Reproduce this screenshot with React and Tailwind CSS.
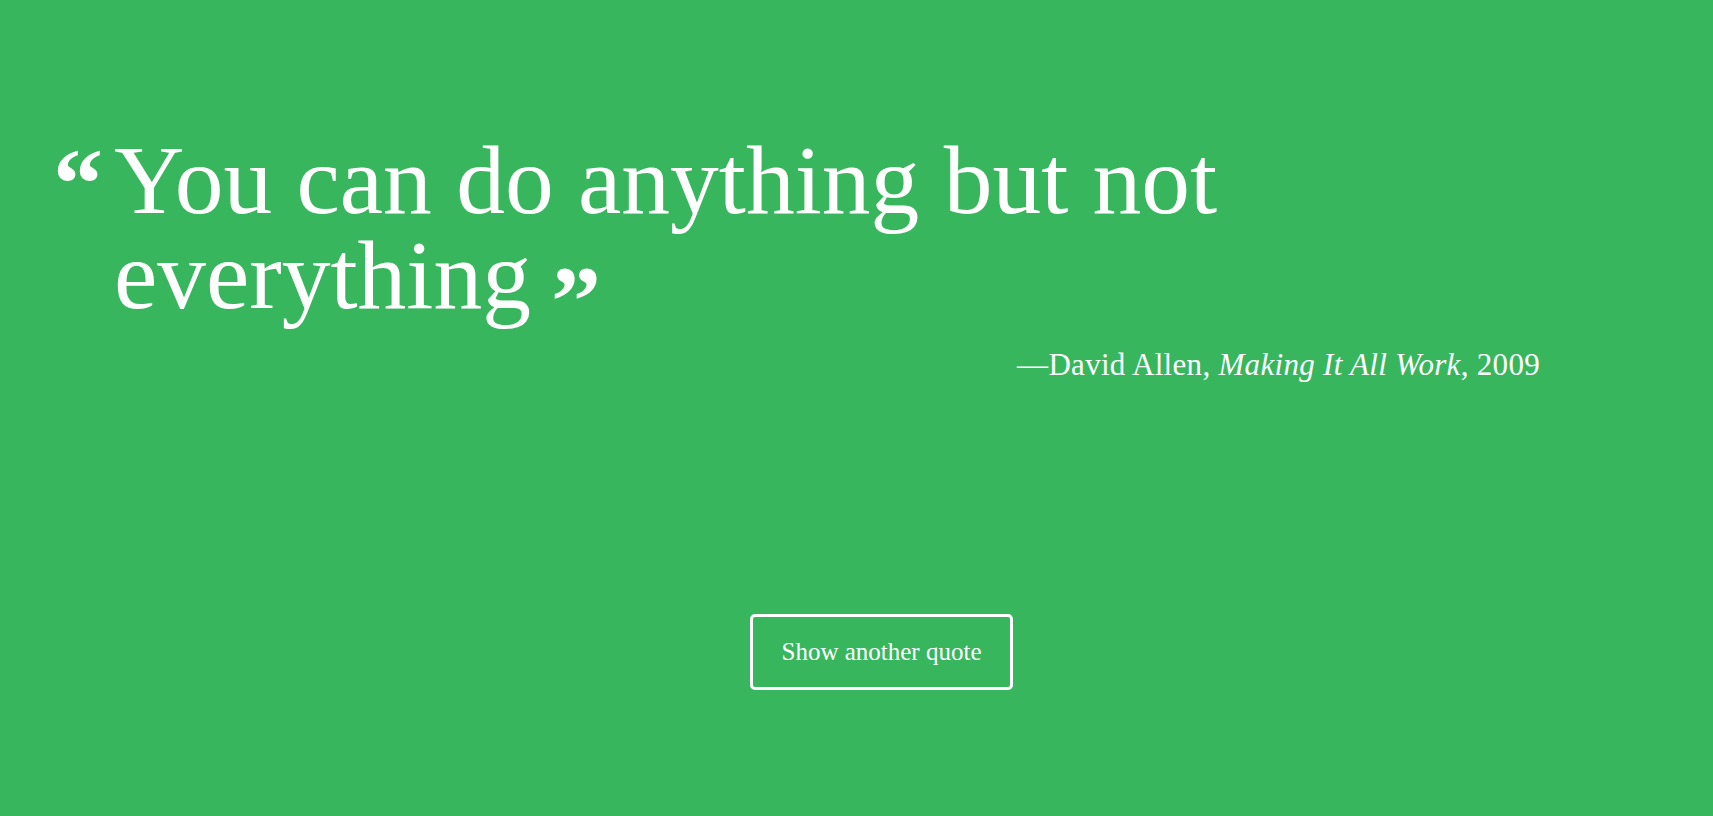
import React, { useState } from "react";

const quotes = [
    {
        text: "You can do anything but not everything",
        author: "David Allen",
        source: "Making It All Work",
        year: "2009",
    },
    {
        text: "The best way to predict the future is to invent it",
        author: "Alan Kay",
        source: "Stanford Lecture",
        year: "1971",
    },
];

const App = () => {
    const [index, setIndex] = useState(0);
    const quote = quotes[index];

    return (
        <div className="min-h-screen bg-[#38b65e] text-white font-['Liberation_Serif',serif] pl-[50px] pt-[133px] pb-10 flex flex-col">
            <blockquote className="flex items-baseline w-[1490px]">
                <span className="w-[64px] shrink-0 pl-[3px] text-[100px] font-bold leading-[0] translate-y-[4px]">
                    &ldquo;
                </span>
                <div className="flex-1">
                    <p className="text-[97.5px] leading-[95px]">
                        {quote.text}
                        <span className="ml-[20px] text-[100px] font-bold leading-[0] align-[-26px]">
                            &rdquo;
                        </span>
                    </p>
                    <footer className="mt-[19px] text-right text-[31px] leading-[45px] tracking-[0.3px]">
                        &mdash;{quote.author}, <cite className="italic">{quote.source}</cite>, {quote.year}
                    </footer>
                </div>
            </blockquote>

            <div className="flex justify-center mt-[227px]">
                <button
                    type="button"
                    onClick={() => setIndex((index + 1) % quotes.length)}
                    className="border-[3px] border-white rounded-[5px] w-[263px] h-[76px] text-[25px] text-white cursor-pointer hover:bg-white/10"
                >
                    Show another quote
                </button>
            </div>
        </div>
    );
};

export default App;
